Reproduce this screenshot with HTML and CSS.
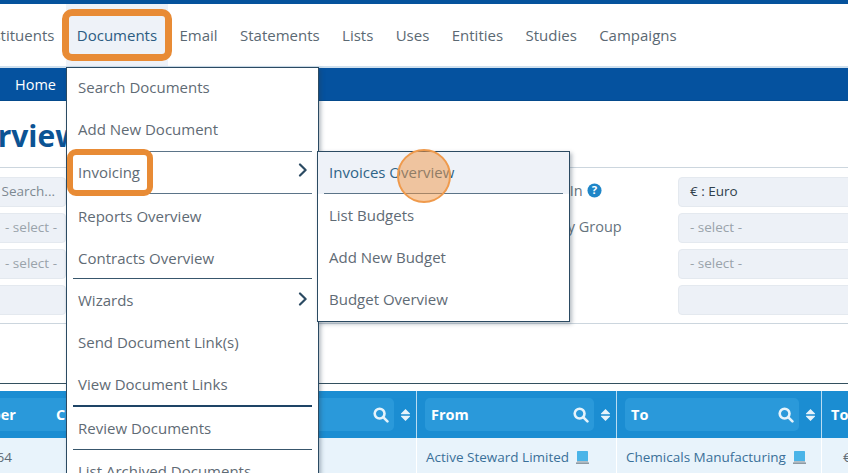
FILE: index.html
```html
<!DOCTYPE html>
<html lang="en">
<head>
<meta charset="utf-8">
<title>Invoices Overview</title>
<link rel="stylesheet" href="styles.css">
</head>
<body>
<div class="page">
  <div class="topbar"></div>
  <nav class="nav">
    <a class="nav-item">Constituents</a>
    <a class="nav-item nav-active">Documents</a>
    <a class="nav-item">Email</a>
    <a class="nav-item">Statements</a>
    <a class="nav-item">Lists</a>
    <a class="nav-item">Uses</a>
    <a class="nav-item">Entities</a>
    <a class="nav-item">Studies</a>
    <a class="nav-item">Campaigns</a>
  </nav>
  <div class="crumbs"><span>Home</span></div>
  <h1 class="title">Overview</h1>
  <section class="filters">
    <div class="field-col">
      <div class="field search-field">Search...</div>
      <div class="field">- select -</div>
      <div class="field">- select -</div>
      <div class="field"></div>
    </div>
    <div class="label-col">
      <div class="label">Displayed In <svg class="help" viewBox="0 0 16 16"><circle cx="8" cy="8" r="7.5" fill="#1f86c8"/><text x="8" y="12" text-anchor="middle" class="help-mark">?</text></svg></div>
      <div class="label">Beneficiary Group</div>
      <div class="label"></div>
      <div class="label"></div>
    </div>
    <div class="field-col">
      <div class="field field-value">€ : Euro</div>
      <div class="field">- select -</div>
      <div class="field">- select -</div>
      <div class="field"></div>
    </div>
  </section>
  <section class="table">
    <div class="thead">
      <div class="th th-first"><span class="th-box"><span>Number</span></span></div>
      <div class="th th-second"><span class="th-box"><span>Client</span><svg class="ic-search" viewBox="0 0 16 16"><circle cx="6.6" cy="6.6" r="4.9" /><line x1="10.4" y1="10.4" x2="14.4" y2="14.4"/></svg></span><svg class="ic-sort" viewBox="0 0 11 14"><path d="M5.5 1 10 5.6Q10.3 6.2 9.6 6.2H1.4Q.7 6.2 1 5.6ZM5.5 13 1 8.4Q.7 7.8 1.4 7.8H9.6Q10.3 7.8 10 8.4Z"/></svg></div>
      <div class="th"><span class="th-box"><span>From</span><svg class="ic-search" viewBox="0 0 16 16"><circle cx="6.6" cy="6.6" r="4.9" /><line x1="10.4" y1="10.4" x2="14.4" y2="14.4"/></svg></span><svg class="ic-sort" viewBox="0 0 11 14"><path d="M5.5 1 10 5.6Q10.3 6.2 9.6 6.2H1.4Q.7 6.2 1 5.6ZM5.5 13 1 8.4Q.7 7.8 1.4 7.8H9.6Q10.3 7.8 10 8.4Z"/></svg></div>
      <div class="th"><span class="th-box"><span>To</span><svg class="ic-search" viewBox="0 0 16 16"><circle cx="6.6" cy="6.6" r="4.9" /><line x1="10.4" y1="10.4" x2="14.4" y2="14.4"/></svg></span><svg class="ic-sort" viewBox="0 0 11 14"><path d="M5.5 1 10 5.6Q10.3 6.2 9.6 6.2H1.4Q.7 6.2 1 5.6ZM5.5 13 1 8.4Q.7 7.8 1.4 7.8H9.6Q10.3 7.8 10 8.4Z"/></svg></div>
      <div class="th th-total"><span class="th-box"><span>Total</span></span></div>
    </div>
    <div class="tr">
      <div class="td td-num">1064</div>
      <div class="td td-client"></div>
      <div class="td"><a class="link">Active Steward Limited</a><svg class="ic-pc" viewBox="0 0 13 13"><rect x="1" y="0" width="11" height="10" rx=".6" fill="#4ab4e8"/><rect x="1" y="10" width="11" height="1.4" fill="#b3bec6"/><rect x="0" y="11.4" width="13" height="1.6" fill="#8e9aa3"/></svg></div>
      <div class="td"><a class="link">Chemicals Manufacturing</a><svg class="ic-pc" viewBox="0 0 13 13"><rect x="1" y="0" width="11" height="10" rx=".6" fill="#4ab4e8"/><rect x="1" y="10" width="11" height="1.4" fill="#b3bec6"/><rect x="0" y="11.4" width="13" height="1.6" fill="#8e9aa3"/></svg></div>
      <div class="td td-total">€ 100</div>
    </div>
  </section>

  <ul class="menu">
    <li class="mi mi-first">Search Documents</li>
    <li class="mi">Add New Document</li>
    <li class="mi mi-lines">Invoicing<svg class="chev" viewBox="0 0 10 14"><path d="M2 1.5 7.6 7 2 12.5"/></svg></li>
    <li class="mi mi-reports">Reports Overview</li>
    <li class="mi mi-under">Contracts Overview</li>
    <li class="mi">Wizards<svg class="chev" viewBox="0 0 10 14"><path d="M2 1.5 7.6 7 2 12.5"/></svg></li>
    <li class="mi">Send Document Link(s)</li>
    <li class="mi mi-heavy">View Document Links</li>
    <li class="mi mi-review mi-under">Review Documents</li>
    <li class="mi">List Archived Documents</li>
  </ul>
  <ul class="submenu">
    <li class="si si-active">Invoices Overview</li>
    <li class="si">List Budgets</li>
    <li class="si">Add New Budget</li>
    <li class="si">Budget Overview</li>
  </ul>
  <div class="mark mark-docs"></div>
  <div class="mark mark-inv"></div>
  <div class="cursor"></div>
</div>
</body>
</html>
```

FILE: styles.css
```css
* { box-sizing: border-box; }
html, body { margin: 0; padding: 0; }
body { background: #fff; font-family: "Open Sans", "Liberation Sans", sans-serif; font-size: 15px; color: #5d6b76; }
.page { position: relative; width: 848px; height: 473px; overflow: hidden; background: #fff; }

.topbar { height: 4px; background: #05529c; }
.nav { display: flex; height: 64px; margin-left: -45.4px; border-bottom: 2px solid #cfe0ee; }
.nav-item { display: flex; align-items: center; padding: 0 11.2px; color: #5b6973; white-space: nowrap; }
.nav-active { background: #eef2f8; color: #2c5c82; }
.crumbs { display: flex; align-items: center; height: 33px; padding-left: 15px; background: #05529f; color: #fff; font-size: 14.5px; font-weight: 500; border-bottom: 1px solid #044a8c; }
.title { margin: 0 0 0 -61px; height: 66px; padding: 17px 0 0 0; font-size: 30px; line-height: 36px; font-weight: 700; color: #0b5394; white-space: nowrap; }

.filters { display: grid; grid-template-columns: 660px 178px 1fr; height: 157px; margin-left: -160px; padding-top: 9px; border-top: 1px solid #ccd6de; border-bottom: 1px solid #ccd6de; }
.field-col { display: flex; flex-direction: column; gap: 6px; }
.filters .field-col:first-child { width: 226px; }
.field { height: 30px; padding: 0 8px 2px 11px; display: flex; align-items: center; background: #edf1f7; border: 1px solid #e4e9ef; border-radius: 4px; color: #9aa3ab; font-size: 13.5px; white-space: nowrap; justify-content: flex-end; }
.filters .field-col:last-child .field { justify-content: flex-start; width: 240px; }
.field-value { color: #30404c !important; }
.search-field { color: #7d8992; padding-right: 10px; }
.label-col { display: flex; flex-direction: column; gap: 6px; }
.label { height: 30px; padding-bottom: 3px; display: flex; align-items: center; gap: 4px; color: #66737d; white-space: nowrap; font-size: 14.5px; }
.help { width: 15px; height: 15px; flex: none; }
.help-mark { font-size: 12px; font-weight: 700; fill: #fff; font-family: "Open Sans", sans-serif; }

.table { margin-top: 59px; margin-left: -60px; width: 1000px; border-top: 1px solid #33505f; padding-top: 7px; }
.thead, .tr { display: grid; grid-template-columns: 110px 366px 200px 205px 119px; }
.thead { height: 47px; background: #1b8dd2; font-size: 14.5px; }
.th { display: flex; align-items: center; gap: 6px; padding: 0 5px 0 8px; border-left: 1px solid #b9dcf2; color: #fff; font-weight: 700; }
.th-first { border-left: 0; padding: 0 0 0 10px; }
.th-second { border-left: 0; padding-left: 0; }
.th-box { flex: 1; display: flex; align-items: center; justify-content: space-between; height: 33px; padding: 0 5px 0 6px; background: #2a99da; border-radius: 5px; }
.th-first .th-box { border-radius: 5px 0 0 5px; }
.th-second .th-box { border-radius: 0 5px 5px 0; }
.th-total { padding-left: 3px; }
.th-total .th-box { background: none; }
.ic-search { width: 16px; height: 16px; fill: none; stroke: #e6f3fb; stroke-width: 2.6; stroke-linecap: round; }
.ic-sort { width: 11px; height: 14px; fill: #e6f3fb; flex: none; }
.tr { height: 38px; background: #e8f3fb; font-size: 13.5px; }
.td { display: flex; align-items: center; gap: 7px; padding: 0 0 0 9px; border-left: 1px solid #fff; white-space: nowrap; }
.td-num { justify-content: flex-end; padding-right: 38px; color: #5d6b76; border-left: 0; }
.td-client { border-left: 0; }
.td-total { padding-left: 21px; }
.link { color: #3a7099; }
.ic-pc { width: 13px; height: 13px; flex: none; }

.menu, .submenu { position: absolute; margin: 0; padding: 0; list-style: none; background: #fff; border: 1px solid #2b4a62; box-shadow: 2px 2px 4px rgba(40, 60, 80, .35); }
.menu { left: 66px; top: 67px; width: 253px; height: 430px; }
.mi { position: relative; display: flex; align-items: center; justify-content: space-between; height: 42px; padding: 0 10px 0 11px; color: #5f6b75; white-space: nowrap; }
.mi-first { height: 40px; padding-bottom: 2px; }
.mi-lines { height: 43px; margin-top: 1px; padding-bottom: 2px; }
.mi-reports { height: 43px; padding-top: 1px; }
.mi-heavy { height: 44px; padding-bottom: 2px; }
.mi-review { height: 43px; padding-bottom: 2px; }
.mi-lines::before, .mi-lines::after, .mi-under::after, .mi-heavy::after { content: ""; position: absolute; left: 6px; right: 6px; height: 1px; background: #5b7488; }
.mi-lines::before { top: 0; }
.mi-lines::after { bottom: 0; }
.mi-under::after { bottom: 0; background: #38566c; }
.mi-heavy::after { bottom: 0; height: 2px; background: #1e4466; }
.chev { width: 10px; height: 14px; margin-top: -3px; fill: none; stroke: #2b4a62; stroke-width: 2.2; stroke-linecap: round; stroke-linejoin: round; }
.submenu { left: 317px; top: 151px; width: 253px; height: 171px; }
.si { display: flex; align-items: center; height: 42px; padding: 0 12px 0 11px; color: #5f6b75; white-space: nowrap; }
.si-active { position: relative; padding-bottom: 2px; background: #eef2f8; color: #2f6487; }
.si-active::after { content: ""; position: absolute; left: 6px; right: 6px; bottom: 0; height: 1px; background: #5b7488; }

.mark { position: absolute; border-style: solid; border-color: #e88b35; }
.mark-docs { left: 62px; top: 9px; width: 110px; height: 52px; border-width: 7px; border-radius: 10px; }
.mark-inv { left: 67px; top: 149px; width: 86px; height: 47px; border-width: 6px; border-radius: 9px; }
.cursor { position: absolute; left: 397px; top: 149px; width: 54px; height: 54px; border-radius: 50%; background: rgba(240, 150, 70, .5); border: 2px solid #ef9a4c; }
```
